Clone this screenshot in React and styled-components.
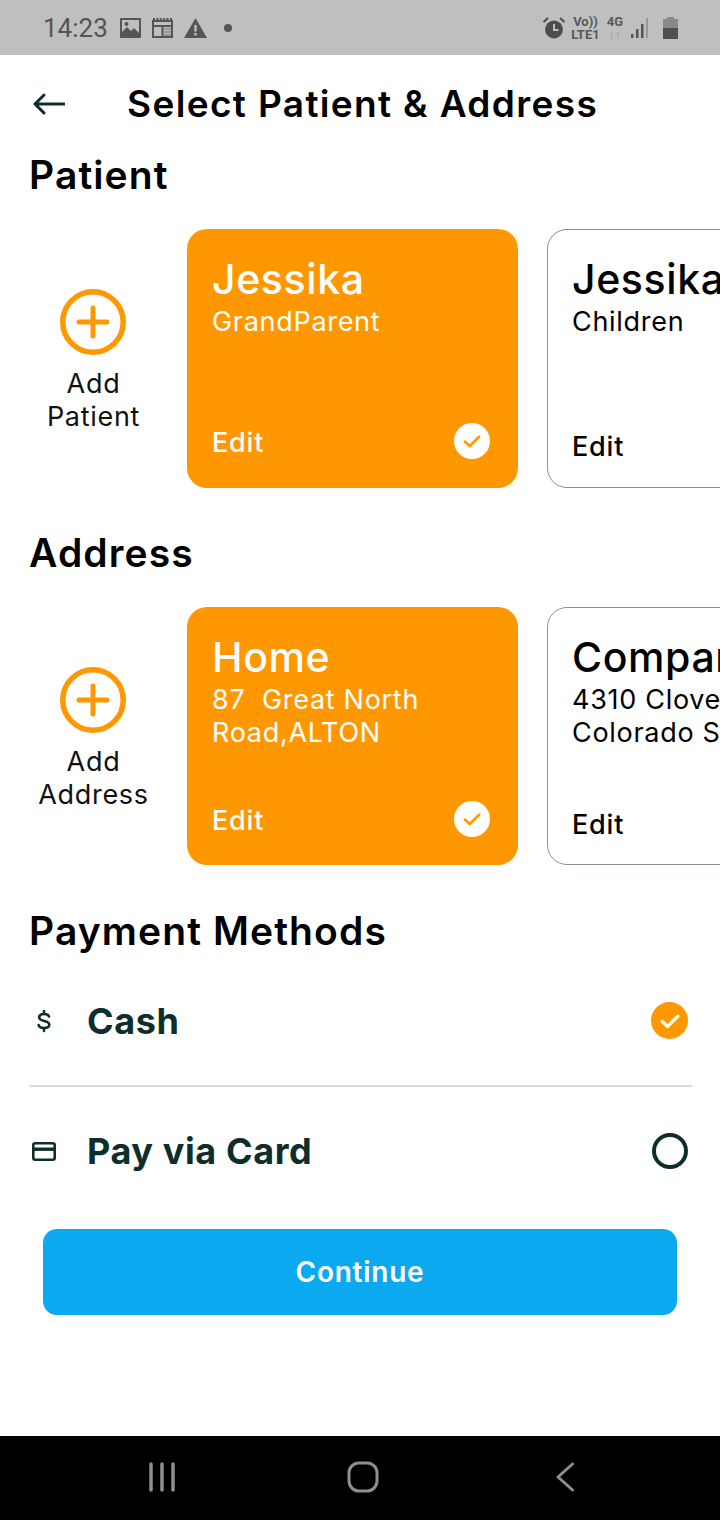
import React from "react";
import styled, { createGlobalStyle } from "styled-components";

const Global = createGlobalStyle`
  html, body { margin: 0; padding: 0; background: #fff; }
  body { font-family: Inter, "Liberation Sans", sans-serif; }
  * { box-sizing: border-box; }
`;
const orange = "#ff9800";
const dark = "#0f2e2b";

const Page = styled.div`
  width: 720px; height: 1520px; display: flex; flex-direction: column; overflow: hidden; background: #fff;
`;
const StatusBar = styled.div`
  height: 55px; background: #bfbfbf; display: flex; align-items: center; justify-content: space-between;
  padding: 0 42px 0 43px; color: #545454; flex: none;
`;
const StatusGroup = styled.div`display: flex; align-items: center; gap: ${p => p.$gap || 11}px;`;
const Clock = styled.span`font: 400 26px Roboto, sans-serif; margin-right: 1px;`;
const Tiny = styled.div`
  font: 700 13px/13px Roboto, sans-serif; text-align: center; color: #585858;
`;
const FaintArrows = styled.span`color: #999;`;
const Content = styled.div`flex: 1; display: flex; flex-direction: column;`;
const Header = styled.div`
  height: 98px; display: flex; align-items: center; padding-left: 33px; flex: none;
`;
const Title = styled.h1`
  margin: 0 0 0 62px; font-size: 37px; line-height: 44px; font-weight: 600; letter-spacing: 1.35px; color: #000; white-space: nowrap;
`;
const SectionTitle = styled.h2`
  margin: 0; padding-left: 29px; font-size: 39px; line-height: 44px; font-weight: 600; letter-spacing: 1.1px; color: #000;
  height: ${p => p.$h}px; flex: none;
`;
const Carousel = styled.div`
  display: flex; height: ${p => p.$h}px; overflow: hidden; flex: none; margin-bottom: ${p => p.$mb}px;
`;
const AddBox = styled.div`
  width: 187px; flex: none; display: flex; flex-direction: column; align-items: center; padding-top: 60px;
`;
const AddIcon = styled.div`display: flex; margin-right: 1px;`;
const AddLabel = styled.div`
  margin-top: 12px; font-size: 27px; line-height: 33px; letter-spacing: .7px; text-align: center; color: #111;
`;
const Card = styled.div`
  width: 331px; flex: none; border-radius: 20px; margin-right: 29px; position: relative;
  padding: ${p => p.$active ? "25px 25px 0" : "24px 24px 0"};
  background: ${p => p.$active ? orange : "#fff"};
  color: ${p => p.$active ? "#fff" : "#000"};
  border: ${p => p.$active ? "none" : "1px solid #8a8f8f"};
  display: flex; flex-direction: column;
`;
const CardName = styled.div`font-size: 41px; line-height: 50px; font-weight: 500; letter-spacing: .6px; white-space: nowrap;`;
const CardSub = styled.div`
  font-size: 27px; line-height: 33px; letter-spacing: .7px; white-space: pre; margin-top: 1px;
`;
const Edit = styled.div`
  position: absolute; left: ${p => p.$active ? 25 : 24}px; top: ${p => p.$active ? 197 : 200}px;
  font-size: 27px; line-height: 33px; font-weight: 500; letter-spacing: .8px;
`;
const CheckBadge = styled.div`
  position: absolute; right: 28px; top: 194px; width: 36px; height: 36px; border-radius: 50%;
  background: #fff; display: flex; align-items: center; justify-content: center;
`;
const PayRow = styled.div`
  height: ${p => p.$h}px; flex: none; display: flex; align-items: center; padding: 0 32px 0 30px;
`;
const PayIcon = styled.div`width: 57px; flex: none; display: flex; align-items: center; padding-left: ${p => p.$inset}px;`;
const PayLabel = styled.div`
  flex: 1; font-size: 36px; font-weight: 700; color: ${dark}; line-height: 44px; letter-spacing: .6px;
`;
const CheckDot = styled.div`
  width: 37px; height: 37px; border-radius: 50%; background: ${orange};
  display: flex; align-items: center; justify-content: center;
`;
const Radio = styled.div`
  width: 36px; height: 36px; border-radius: 50%; border: 4px solid ${dark};
`;
const Divider = styled.div`height: 2px; background: #dcdcdc; margin: 0 28px 0 29px; flex: none;`;
const ContinueBtn = styled.button`
  display: block; margin: 14px 43px 0; width: 634px; height: 86px; border: 0; border-radius: 14px;
  background: #0aa9f0; color: #fff; font: 600 28px Inter, sans-serif; letter-spacing: .75px; flex: none;
`;
const NavBar = styled.div`
  height: 84px; background: #000; flex: none; display: flex; align-items: center; justify-content: center;
  padding: 0 0 2px 6px;
`;
const NavSlot = styled.div`width: 201.500px; display: flex; justify-content: center;`;

const Check = ({ color, size = 22, weight = 2.400 }) => (
  <svg width={size} height={size} viewBox="0 0 20 20" fill="none">
    <path d="M3.500 10.500 L8 14.500 L16.500 6" stroke={color} strokeWidth={weight} strokeLinecap="round" strokeLinejoin="round" />
  </svg>
);
const PlusCircle = () => (
  <svg width="66" height="66" viewBox="0 0 66 66" fill="none">
    <circle cx="33" cy="33" r="30.250" stroke={orange} strokeWidth="5.500" />
    <path d="M33 19V47M19 33H47" stroke={orange} strokeWidth="5" strokeLinecap="round" />
  </svg>
);

function Row({ h, mb, add, cards }) {
  return (
    <Carousel $h={h} $mb={mb}>
      <AddBox>
        <AddIcon><PlusCircle /></AddIcon>
        <AddLabel>Add<br />{add}</AddLabel>
      </AddBox>
      {cards.map((c, i) => (
        <Card key={i} $active={c.active}>
          <CardName>{c.name}</CardName>
          <CardSub>{c.sub}</CardSub>
          <Edit $active={c.active}>Edit</Edit>
          {c.active && <CheckBadge><Check color={orange} /></CheckBadge>}
        </Card>
      ))}
    </Carousel>
  );
}

export default function App() {
  return (
    <Page>
      <Global />
      <StatusBar>
        <StatusGroup>
          <Clock>14:23</Clock>
          <svg width="21" height="20" viewBox="0 0 21 20" fill="#555">
            <path fillRule="evenodd" d="M1 0h19a1 1 0 0 1 1 1v18a1 1 0 0 1-1 1H1a1 1 0 0 1-1-1V1a1 1 0 0 1 1-1ZM2 2v12l5-5 4 4 3-3 5 5V2Z" />
            <circle cx="6.500" cy="6" r="2" />
          </svg>
          <svg width="21" height="20" viewBox="0 0 21 20" fill="none" stroke="#555" strokeWidth="2">
            <rect x="1" y="3" width="19" height="16" />
            <path d="M1 1h19" strokeDasharray="2 1.400" />
            <path d="M1 8h19M10.500 8v11" />
            <path d="M12 11h7M12 14h7M12 17h7" strokeWidth="1.400" stroke="#8a8a8a" />
          </svg>
          <svg width="23" height="20" viewBox="0 0 23 20">
            <path fill="#555" d="M11.500 0 23 20H0Z" />
            <path fill="#bfbfbf" d="M10.300 7h2.400v6.500h-2.400ZM10.300 15h2.400v2.500h-2.400Z" />
          </svg>
          <svg width="8" height="8" viewBox="0 0 8 8" style={{ marginLeft: 6 }}><circle cx="4" cy="4" r="4" fill="#555" /></svg>
        </StatusGroup>
        <StatusGroup $gap={7}>
          <svg width="24" height="23" viewBox="0 0 24 23" fill="#4d4d4d" style={{ marginRight: -2 }}>
            <circle cx="12" cy="13.500" r="9" />
            <path d="M1.500 6 6 2M22.500 6 18 2" stroke="#4d4d4d" strokeWidth="2" />
            <path d="M12 8v6h4.500" stroke="#bfbfbf" strokeWidth="2" fill="none" />
          </svg>
          <Tiny>Vo))<br />LTE1</Tiny>
          <Tiny>4G<br /><FaintArrows>↓↑</FaintArrows></Tiny>
          <svg width="19" height="22" viewBox="0 0 19 22">
            <rect x="1" y="17" width="2.500" height="4" fill="#555" />
            <rect x="6" y="12" width="2.500" height="9" fill="#555" />
            <rect x="11" y="7" width="2.500" height="14" fill="#555" />
            <rect x="16" y="1" width="2" height="20" fill="#999" />
          </svg>
          <svg width="15" height="22" viewBox="0 0 15 22" style={{ marginLeft: 7 }}>
            <path fill="#8a8a8a" d="M4 0h7v2h4v9H0V2h4Z" />
            <rect y="11" width="15" height="11" fill="#4f4f4f" />
          </svg>
        </StatusGroup>
      </StatusBar>
      <Content>
        <Header>
          <svg width="32" height="24" viewBox="0 0 32 24" fill="none" stroke={dark} strokeWidth="3" strokeLinecap="round" strokeLinejoin="round">
            <path d="M2 12H31M11 3 2 12l9 9" />
          </svg>
          <Title>Select Patient &amp; Address</Title>
        </Header>
        <SectionTitle $h={76}>Patient</SectionTitle>
        <Row h={259} mb={43} add="Patient" cards={[
          { name: "Jessika", sub: "GrandParent", active: true },
          { name: "Jessika", sub: "Children" },
        ]} />
        <SectionTitle $h={76}>Address</SectionTitle>
        <Row h={258} mb={44} add="Address" cards={[
          { name: "Home", sub: "87  Great North\nRoad,ALTON", active: true },
          { name: "Company", sub: "4310 Clover Drive\nColorado Springs" },
        ]} />
        <SectionTitle $h={47}>Payment Methods</SectionTitle>
        <PayRow $h={129}>
          <PayIcon $inset={6}>
            <svg width="16" height="24" viewBox="0 0 16 24" fill="none" stroke={dark} strokeWidth="2.600" strokeLinecap="round">
              <path d="M13 7.500C12.500 5.800 10.800 5 8 5 5 5 3.200 6.500 3.200 8.500 3.200 13 13.300 10.800 13.300 15.500 13.300 17.800 11 19 8 19 5 19 3 17.800 2.600 16M8 2v3M8 19v3" />
            </svg>
          </PayIcon>
          <PayLabel>Cash</PayLabel>
          <CheckDot><Check color="#fff" size={24} weight={2.800} /></CheckDot>
        </PayRow>
        <Divider />
        <PayRow $h={128}>
          <PayIcon $inset={2}>
            <svg width="24" height="19" viewBox="0 0 24 19" fill="none">
              <rect x="1.300" y="1.300" width="21.400" height="16.400" rx="2" stroke={dark} strokeWidth="2.600" />
              <rect x="1" y="5.500" width="22" height="3.400" fill={dark} />
            </svg>
          </PayIcon>
          <PayLabel>Pay via Card</PayLabel>
          <Radio />
        </PayRow>
        <ContinueBtn>Continue</ContinueBtn>
      </Content>
      <NavBar>
        <NavSlot>
          <svg width="28" height="30" viewBox="0 0 28 30" stroke="#8f8f8f" strokeWidth="3.500" strokeLinecap="round">
            <path d="M3 2v26M14 2v26M25 2v26" />
          </svg>
        </NavSlot>
        <NavSlot>
          <svg width="32" height="32" viewBox="0 0 32 32" fill="none" stroke="#8f8f8f" strokeWidth="3">
            <rect x="2" y="2" width="28" height="28" rx="10" />
          </svg>
        </NavSlot>
        <NavSlot>
          <svg width="20" height="30" viewBox="0 0 20 30" fill="none" stroke="#8f8f8f" strokeWidth="3" strokeLinecap="round" strokeLinejoin="round">
            <path d="M17.500 2 3 15l14.500 13" />
          </svg>
        </NavSlot>
      </NavBar>
    </Page>
  );
}
